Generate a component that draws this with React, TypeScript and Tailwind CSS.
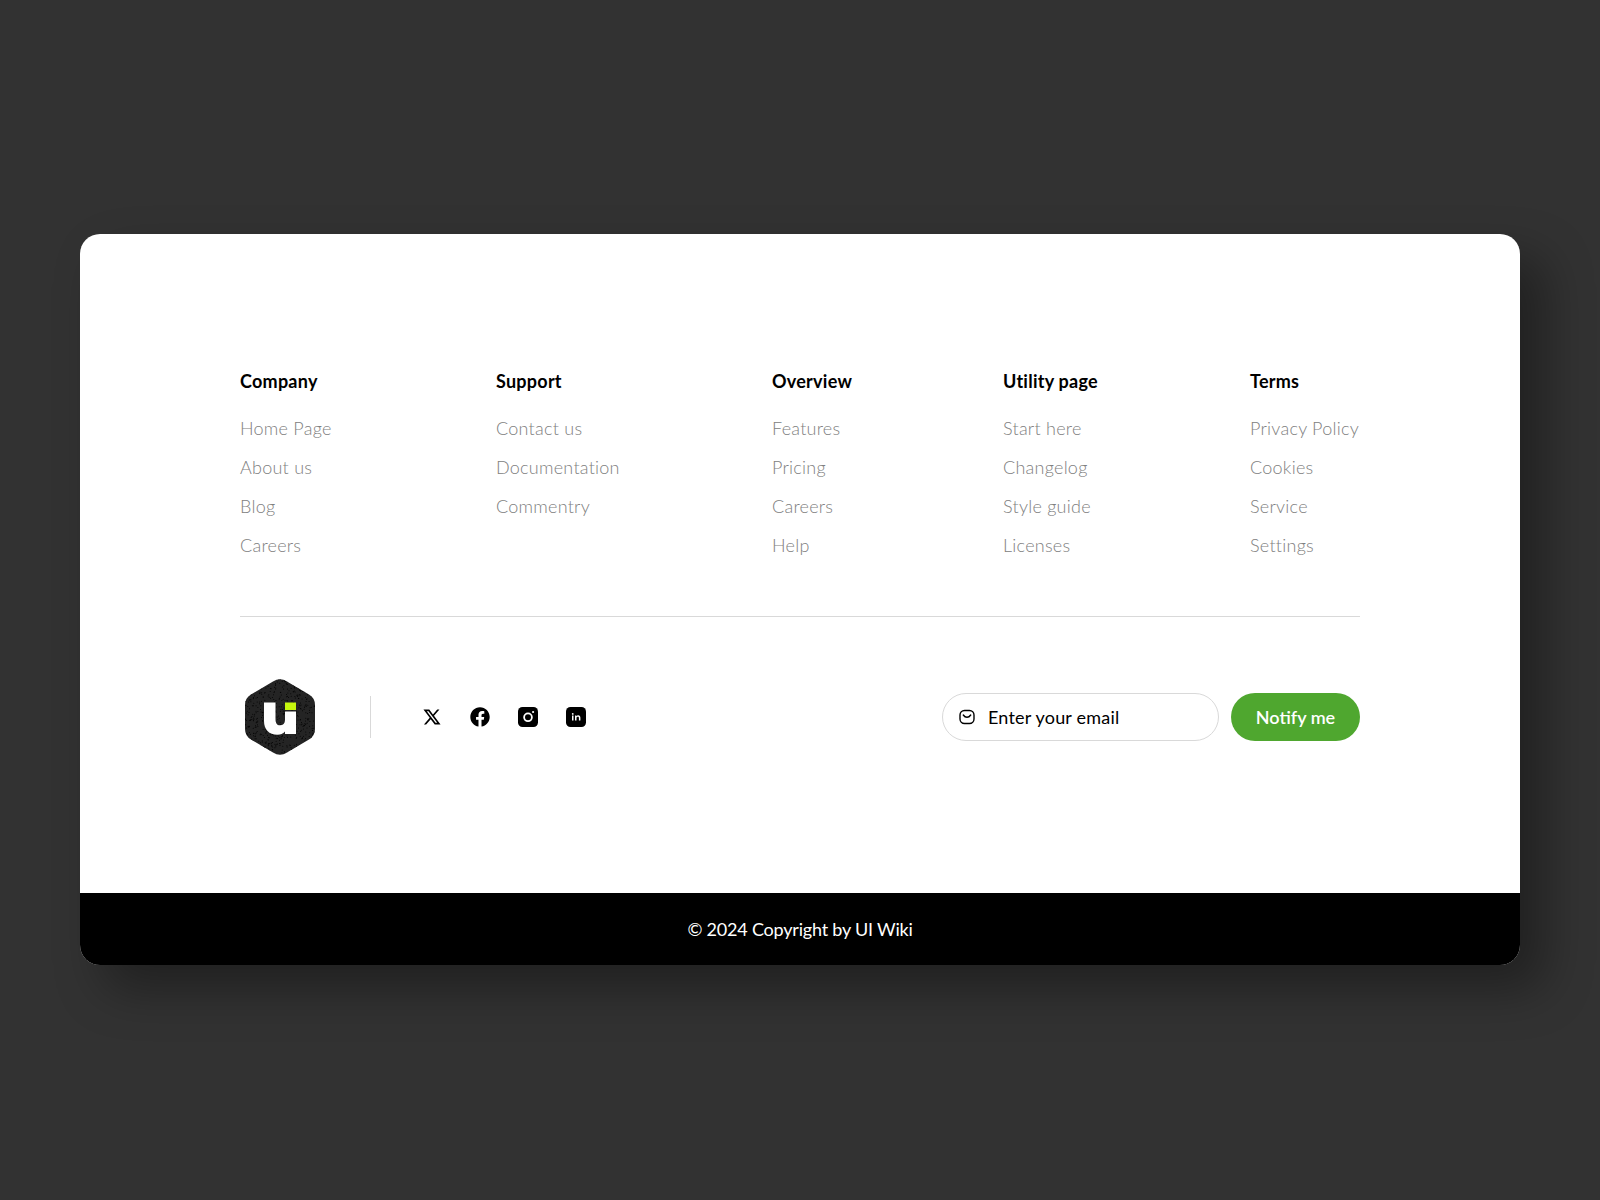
import React from "react";
import { RiTwitterXLine } from "react-icons/ri";
import { FaFacebook } from "react-icons/fa";

const columns = [
  { title: "Company", w: "w-[256px]", links: ["Home Page", "About us", "Blog", "Careers"] },
  { title: "Support", w: "w-[276px]", links: ["Contact us", "Documentation", "Commentry"] },
  { title: "Overview", w: "w-[231px]", links: ["Features", "Pricing", "Careers", "Help"] },
  { title: "Utility page", w: "w-[247px]", links: ["Start here", "Changelog", "Style guide", "Licenses"] },
  { title: "Terms", w: "w-[110px]", links: ["Privacy Policy", "Cookies", "Service", "Settings"] },
];

function dots() {
  const out: React.ReactNode[] = [];
  let s = 7;
  for (let i = 0; i < 640; i++) {
    s = (s * 16807) % 2147483647;
    const x = (s % 7000) / 100;
    s = (s * 16807) % 2147483647;
    const y = (s % 7600) / 100;
    out.push(<circle key={i} cx={x} cy={y} r="0.5" fill="#000" />);
  }
  return out;
}

function Logo() {
  return (
    <svg width="80" height="80" viewBox="-5 -2 80 80" className="block">
      <defs>
        <clipPath id="hex">
          <path d="M28 2.500Q35 -2 42 2.500L64 15.500Q70 19 70 26V50Q70 57 64 60.500L42 73.500Q35 78 28 73.500L6 60.500Q0 57 0 50V26Q0 19 6 15.500Z" />
        </clipPath>
      </defs>
      <g clipPath="url(#hex)">
        <rect x="0" y="-2" width="70" height="80" fill="#242424" />
        {dots()}
      </g>
      <path d="M19 23.500H30.500V40C30.500 44.200 32 46.300 35 46.300C38 46.300 40 44.500 40 41V32.500H51V55H40V52.500C38 54.700 35.500 55.800 32.500 55.800C24 55.800 19 50.500 19 42Z" fill="#fff" />
      <rect x="40" y="23.500" width="11" height="7.500" fill="#c6f70e" />
    </svg>
  );
}

function Instagram() {
  return (
    <svg width="20" height="20" viewBox="0 0 20 20" className="block">
      <rect width="20" height="20" rx="4.500" fill="#000" />
      <circle cx="10" cy="10.300" r="3.900" fill="none" stroke="#fff" strokeWidth="1.800" />
      <circle cx="15.100" cy="5" r="1.100" fill="#fff" />
    </svg>
  );
}

function Linkedin() {
  return (
    <svg width="20" height="20" viewBox="0 0 20 20" className="block">
      <rect width="20" height="20" rx="4.500" fill="#000" />
      <rect x="6" y="8.500" width="1.500" height="5" fill="#fff" />
      <circle cx="6.750" cy="6.900" r="0.900" fill="#fff" />
      <path d="M9 8.500h1.400v.7c.4-.5 1-.85 1.800-.85 1.500 0 2.200.95 2.200 2.450v2.700h-1.500v-2.500c0-.8-.3-1.300-1-1.300s-1.400.5-1.400 1.400v2.400H9z" fill="#fff" />
    </svg>
  );
}

function Mail() {
  return (
    <svg width="16" height="16" viewBox="0 0 16 16" fill="none" stroke="#000" strokeWidth="1.400" strokeLinecap="round" className="block shrink-0">
      <rect x="1" y="1.500" width="14" height="13" rx="4.500" />
      <path d="M4.300 6c1 1.500 2.300 2.300 3.700 2.300S10.700 7.500 11.700 6" />
    </svg>
  );
}

export default function App() {
  return (
    <div className="min-h-screen bg-[#323232] flex justify-center pt-[234px] font-['Lato','Liberation_Sans',sans-serif]">
      <div className="w-[1440px] h-[731px] rounded-[20px] overflow-hidden bg-white shadow-[24px_24px_48px_rgba(0,0,0,0.35)]">
        <div className="px-40 pt-[136px] pb-[136px]">
          <div className="flex pb-[59px] border-b border-[#d9d9d9]">
            {columns.map((c) => (
              <div key={c.title} className={c.w}>
                <h3 className="text-[18px] leading-[23px] font-bold tracking-[0.25px] text-black mb-6">{c.title}</h3>
                <ul className="flex flex-col gap-4">
                  {c.links.map((l) => (
                    <li key={l} className="text-[18px] leading-[23px] font-light tracking-[0.25px] text-[#808080] whitespace-nowrap">{l}</li>
                  ))}
                </ul>
              </div>
            ))}
          </div>
          <div className="flex items-center justify-between pt-[60px]">
            <div className="flex items-center">
              <Logo />
              <div className="w-px h-[42px] bg-[#d9d9d9] ml-[50px] mr-[51px]" />
              <div className="flex items-center gap-7">
                <RiTwitterXLine className="w-5 h-5 text-black" />
                <FaFacebook className="w-5 h-5 text-black" />
                <Instagram />
                <Linkedin />
              </div>
            </div>
            <div className="flex items-center gap-3">
              <div className="w-[277px] h-12 rounded-full border border-[#d9d9d9] flex items-center pl-4 gap-[13px]">
                <Mail />
                <span className="text-[18px] tracking-[0.2px] text-black">Enter your email</span>
              </div>
              <button className="w-[129px] h-12 rounded-full bg-[#4fa72f] text-white text-[18px] font-semibold">Notify me</button>
            </div>
          </div>
        </div>
        <div className="h-[72px] bg-black flex items-center justify-center text-white text-[18px] tracking-[-0.2px]">
          © 2024 Copyright by UI Wiki
        </div>
      </div>
    </div>
  );
}
